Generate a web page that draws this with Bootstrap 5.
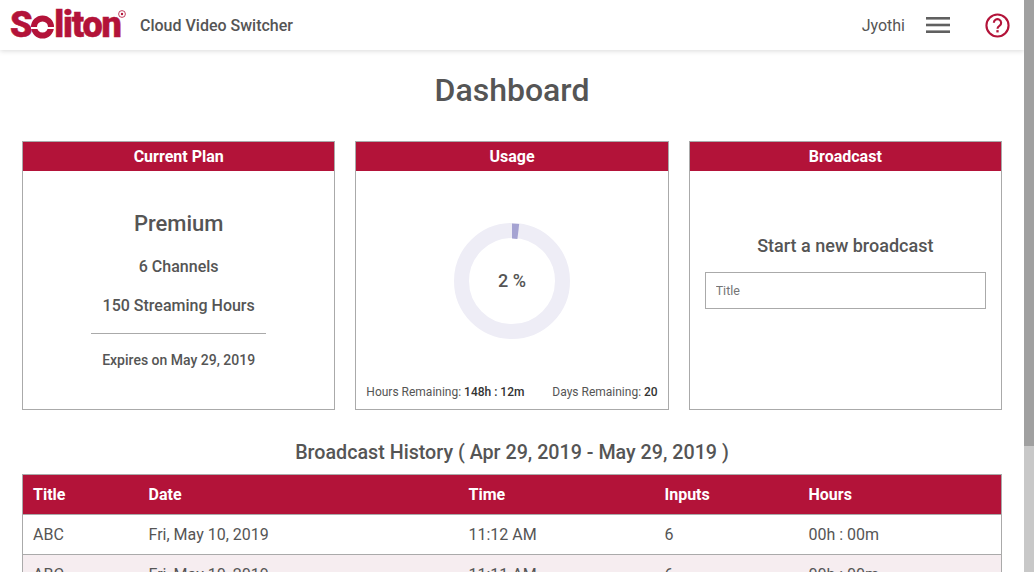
<!DOCTYPE html>
<html>
<head>
    <title>Dashboard</title>
    <link href="https://cdn.jsdelivr.net/npm/bootstrap@5.3.2/dist/css/bootstrap.min.css" rel="stylesheet">
    <style>
        html, body {
            height: 100%;
            overflow: hidden;
        }
        body {
            font-family: Roboto, "Liberation Sans", sans-serif;
            color: #555;
            background-color: #fff;
        }
        .page-area {
            height: 572px;
            overflow: hidden;
        }
        .fake-scroll {
            width: 10px;
            background-color: #c8c8c8;
        }
        .fake-thumb {
            height: 446px;
            background-color: #a0a0a0;
        }
        .top-bar {
            height: 50px;
            padding: 0 14px 0 10px;
            box-shadow: 0 1px 5px rgba(0, 0, 0, .15);
        }
        .logo-box {
            width: 130px;
        }
        .logo-word {
            font-weight: 900;
            font-size: 36px;
            line-height: 1;
            letter-spacing: -1.2px;
            color: #b31339;
            -webkit-text-stroke: .5px #b31339;
        }
        .logo-reg {
            width: 8px;
            height: 8px;
            top: 3px;
            left: 108px;
        }
        .app-name {
            font-size: 16px;
            font-weight: 500;
            line-height: 20px;
            padding-top: 2px;
            color: #555;
        }
        .user-name {
            font-size: 16px;
            line-height: 20px;
            padding-top: 2px;
            margin-right: 21px;
        }
        .help-icon {
            margin-left: 35px;
        }
        .page-title {
            font-size: 32px;
            font-weight: 500;
            line-height: 40px;
            margin: 20px 0 31px;
            color: #555;
        }
        .cards-row {
            padding: 0 22px;
            gap: 20px;
        }
        .info-box {
            flex: 1 1 0;
            height: 269px;
            border: 1px solid #aaa;
        }
        .box-head {
            height: 29px;
            line-height: 29px;
            background-color: #b31339;
            color: #fff;
            font-size: 16px;
            font-weight: 700;
            text-align: center;
        }
        .plan-name {
            font-size: 22px;
            font-weight: 500;
            margin-top: 38px;
            line-height: 30px;
        }
        .plan-line {
            font-size: 16px;
            font-weight: 500;
            line-height: 20px;
            margin-top: 18px;
        }
        .plan-line + .plan-line {
            margin-top: 19px;
        }
        .plan-rule {
            width: 175px;
            height: 1px;
            background-color: #aaa;
            margin: 17px auto 17px;
        }
        .plan-exp {
            font-size: 14px;
            font-weight: 500;
            line-height: 18px;
        }
        .donut-wrap {
            width: 116px;
            height: 116px;
            margin: 52px auto 0;
        }
        .donut-text {
            font-size: 18px;
            font-weight: 500;
            margin-top: -1px;
        }
        .usage-foot {
            font-size: 12px;
            padding: 0 10px;
            margin-top: 45px;
            line-height: 16px;
        }
        .usage-foot b {
            font-weight: 500;
            color: #333;
        }
        .new-title {
            font-size: 18px;
            font-weight: 500;
            margin-top: 63px;
            line-height: 24px;
            text-align: center;
        }
        .title-input {
            display: block;
            width: calc(100% - 30px);
            height: 37px;
            margin: 14px 15px 0;
            padding: 0 10px;
            border: 1px solid #aaa;
            border-radius: 0;
            font-size: 12.5px;
            color: #555;
        }
        .title-input::placeholder {
            color: #757575;
            opacity: 1;
        }
        .history-title {
            font-size: 19.7px;
            font-weight: 500;
            line-height: 28px;
            margin: 29px 0 7px;
        }
        .table-holder {
            padding: 0 22px;
        }
        .history-table {
            table-layout: fixed;
            width: 100%;
            border-collapse: collapse;
            border: 1px solid #aaa;
            font-size: 16px;
        }
        .history-table th {
            background-color: #b31339;
            color: #fff;
            font-weight: 700;
            height: 40px;
            padding: 0 10px;
        }
        .history-table td {
            height: 40px;
            padding: 0 10px;
            border-top: 1px solid #aaa;
            color: #555;
        }
        .history-table tr.tint td {
            background-color: #f6edf0;
        }
        .col-title { width: 116px; }
        .col-date { width: 320px; }
        .col-time { width: 196px; }
        .col-inputs { width: 144px; }
    </style>
</head>
<body>

<div class="d-flex page-area">
    <div class="flex-grow-1 overflow-hidden">

        <div class="top-bar d-flex align-items-center">
            <div class="logo-box position-relative">
                <span class="logo-word d-flex align-items-center">S<svg width="23" height="27" viewBox="0 0 23 27"><circle cx="11.5" cy="15" r="8.5" fill="none" stroke="#b31339" stroke-width="6"/><path d="M0 16h6.5c3 0 3-3.5 5-3.5s2 3.5 5 3.5H23" fill="none" stroke="#fff" stroke-width="2"/></svg>liton</span>
                <svg class="logo-reg position-absolute" viewBox="0 0 8 8"><circle cx="4" cy="4" r="3.4" fill="none" stroke="#b31339" stroke-width=".8"/><circle cx="4" cy="4" r="1.2" fill="#b31339"/></svg>
            </div>
            <span class="app-name">Cloud Video Switcher</span>
            <span class="user-name ms-auto">Jyothi</span>
            <svg width="24" height="16" viewBox="0 0 24 16"><rect y="0" width="24" height="2.6" fill="#606060"/><rect y="6.7" width="24" height="2.6" fill="#606060"/><rect y="13.4" width="24" height="2.6" fill="#606060"/></svg>
            <svg class="help-icon" width="25" height="25" viewBox="0 0 26 26"><circle cx="13" cy="13" r="11.5" fill="none" stroke="#b31339" stroke-width="2.2"/><path d="M9.2 10.2a3.8 3.8 0 1 1 5.8 3.2c-1.3.8-2 1.5-2 2.9" fill="none" stroke="#b31339" stroke-width="2.2"/><rect x="11.8" y="17.8" width="2.4" height="2.4" fill="#b31339"/></svg>
        </div>

        <h1 class="page-title text-center">Dashboard</h1>

        <div class="cards-row d-flex">
            <div class="info-box text-center">
                <div class="box-head">Current Plan</div>
                <div class="plan-name">Premium</div>
                <div class="plan-line">6 Channels</div>
                <div class="plan-line">150 Streaming Hours</div>
                <div class="plan-rule"></div>
                <div class="plan-exp">Expires on May 29, 2019</div>
            </div>
            <div class="info-box">
                <div class="box-head">Usage</div>
                <div class="donut-wrap position-relative">
                    <svg width="116" height="116" viewBox="0 0 116 116">
                        <circle cx="58" cy="58" r="50.5" fill="none" stroke="#eeedf6" stroke-width="15"/>
                        <path d="M58 0.5 L65.2 1 L63.4 16 L58 15.5Z" fill="#a5a3d2"/>
                    </svg>
                    <span class="donut-text position-absolute top-50 start-50 translate-middle">2&nbsp;%</span>
                </div>
                <div class="usage-foot d-flex justify-content-between">
                    <span>Hours Remaining: <b>148h : 12m</b></span>
                    <span>Days Remaining: <b>20</b></span>
                </div>
            </div>
            <div class="info-box">
                <div class="box-head">Broadcast</div>
                <div class="new-title">Start a new broadcast</div>
                <input class="title-input" type="text" placeholder="Title">
            </div>
        </div>

        <div class="history-title text-center">Broadcast History ( Apr 29, 2019 - May 29, 2019 )</div>

        <div class="table-holder">
            <table class="history-table">
                <colgroup>
                    <col class="col-title"><col class="col-date"><col class="col-time"><col class="col-inputs"><col>
                </colgroup>
                <thead>
                    <tr><th>Title</th><th>Date</th><th>Time</th><th>Inputs</th><th>Hours</th></tr>
                </thead>
                <tbody>
                    <tr><td>ABC</td><td>Fri, May 10, 2019</td><td>11:12 AM</td><td>6</td><td>00h : 00m</td></tr>
                    <tr class="tint"><td>ABC</td><td>Fri, May 10, 2019</td><td>11:11 AM</td><td>6</td><td>00h : 00m</td></tr>
                </tbody>
            </table>
        </div>

    </div>
    <div class="fake-scroll flex-shrink-0"><div class="fake-thumb"></div></div>
</div>

<script src="https://cdn.jsdelivr.net/npm/bootstrap@5.3.2/dist/js/bootstrap.bundle.min.js"></script>
</body>
</html>
